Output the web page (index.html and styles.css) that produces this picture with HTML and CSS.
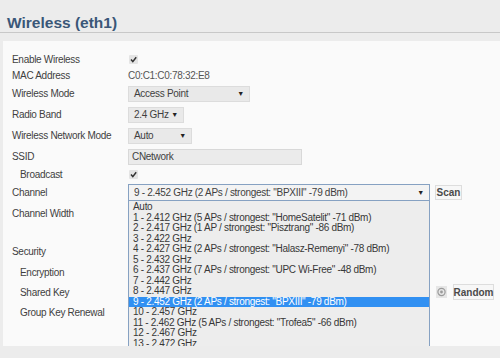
FILE: index.html
```html
<!DOCTYPE html>
<html>
<head>
    <title>Wireless (eth1)</title>
    <meta name="viewport" content="width=device-width, initial-scale=1">
    <link rel="stylesheet" href="styles.css">
</head>
<body>
    <h1 class="pageTitle">Wireless (eth1)</h1>
    <div class="panel">
        <div class="row short">
            <span class="label">Enable Wireless</span>
            <span class="check"><svg width="9" height="9" viewBox="0 0 9 9"><path d="M2 4.6 L3.8 6.6 L7.2 2.2" fill="none" stroke="#333" stroke-width="1.5"/></svg></span>
        </div>
        <div class="row short tall">
            <span class="label">MAC Address</span>
            <span class="value">C0:C1:C0:78:32:E8</span>
        </div>
        <div class="row">
            <span class="label">Wireless Mode</span>
            <span class="select wMode">Access Point<i>▼</i></span>
        </div>
        <div class="row">
            <span class="label">Radio Band</span>
            <span class="select wBand">2.4 GHz<i>▼</i></span>
        </div>
        <div class="row">
            <span class="label">Wireless Network Mode</span>
            <span class="select wNet">Auto<i>▼</i></span>
        </div>
        <div class="row">
            <span class="label">SSID</span>
            <span class="textbox">CNetwork</span>
        </div>
        <div class="row short">
            <span class="label sub">Broadcast</span>
            <span class="check"><svg width="9" height="9" viewBox="0 0 9 9"><path d="M2 4.6 L3.8 6.6 L7.2 2.2" fill="none" stroke="#333" stroke-width="1.5"/></svg></span>
        </div>
        <div class="row">
            <span class="label">Channel</span>
            <div class="channelWrap">
                <span class="select channel">9 - 2.452 GHz (2 APs / strongest: "BPXIII" -79 dBm)<i>▼</i></span>
                <ul class="channelList">
                    <li>Auto</li>
                    <li>1 - 2.412 GHz (5 APs / strongest: "HomeSatelit" -71 dBm)</li>
                    <li>2 - 2.417 GHz (1 AP / strongest: "Pisztrang" -86 dBm)</li>
                    <li>3 - 2.422 GHz</li>
                    <li>4 - 2.427 GHz (2 APs / strongest: "Halasz-Remenyi" -78 dBm)</li>
                    <li>5 - 2.432 GHz</li>
                    <li>6 - 2.437 GHz (7 APs / strongest: "UPC Wi-Free" -48 dBm)</li>
                    <li>7 - 2.442 GHz</li>
                    <li>8 - 2.447 GHz</li>
                    <li class="selected">9 - 2.452 GHz (2 APs / strongest: "BPXIII" -79 dBm)</li>
                    <li>10 - 2.457 GHz</li>
                    <li>11 - 2.462 GHz (5 APs / strongest: "Trofea5" -66 dBm)</li>
                    <li>12 - 2.467 GHz</li>
                    <li>13 - 2.472 GHz</li>
                </ul>
            </div>
            <span class="btn scanBtn">Scan</span>
        </div>
        <div class="row">
            <span class="label">Channel Width</span>
        </div>
        <div class="spacer"></div>
        <div class="row">
            <span class="label">Security</span>
        </div>
        <div class="row snug">
            <span class="label sub">Encryption</span>
        </div>
        <div class="row snug">
            <span class="label sub">Shared Key</span>
            <span class="textbox keyBox"></span>
            <span class="reveal"><svg width="11" height="12" viewBox="0 0 11 12"><rect x="0" y="0" width="11" height="12" fill="#e6e6e6"/><circle cx="5.5" cy="6" r="3.6" fill="none" stroke="#9a9a9a" stroke-width="1.2"/><circle cx="5.5" cy="6" r="1.4" fill="#9a9a9a"/></svg></span>
            <span class="btn randomBtn">Random</span>
        </div>
        <div class="row snug">
            <span class="label sub">Group Key Renewal</span>
        </div>
    </div>
</body>
</html>
```

FILE: styles.css
```css
body {
    margin: 0;
    background: #ececec;
    font-family: "Liberation Sans", Arial, sans-serif;
    font-size: 10px;
    letter-spacing: -0.3px;
    color: #3f3f3f;
    overflow: hidden;
}
.pageTitle {
    margin: 0;
    padding: 14px 0 0 7px;
    height: 18px;
    font-size: 15.5px;
    letter-spacing: 0;
    color: #3a5778;
    border-bottom: 1px solid #c8c8c8;
}
.panel {
    margin: 8px 0 0 3px;
    height: 294px;
    padding-top: 11px;
    background: #fafafa;
}
.row {
    display: flex;
    align-items: center;
    height: 21px;
}
.row.short {
    height: 15px;
}
.row.short.tall {
    height: 16px;
}
.row.snug {
    height: 20px;
}
.spacer {
    height: 17px;
}
.label {
    width: 125px;
    flex-shrink: 0;
    padding-left: 9px;
    box-sizing: border-box;
}
.label.sub {
    padding-left: 17px;
}
.check {
    display: flex;
    width: 9px;
    height: 9px;
    margin-left: 1px;
    background: #e4e4e4;
    border-radius: 1px;
}
.value {
    color: #555;
}
.select {
    display: flex;
    justify-content: space-between;
    align-items: center;
    height: 16px;
    box-sizing: border-box;
    padding: 0 5px 0 5px;
    background: #e9e9e9;
    border: 1px solid #dcdcdc;
    color: #3f3f3f;
}
.select i {
    font-style: normal;
    font-size: 7px;
    color: #222;
}
.wMode {
    width: 122px;
}
.wBand {
    width: 56px;
}
.wNet {
    width: 64px;
}
.textbox {
    display: flex;
    align-items: center;
    width: 174px;
    height: 16px;
    box-sizing: border-box;
    padding-left: 3px;
    background: #ebebeb;
    border: 1px solid #d8d8d8;
}
.keyBox {
    width: 302px;
}
.channel {
    width: 302px;
}
.channelWrap {
    position: relative;
}
.channelWrap .channel {
    height: 17px;
    background: #f3f3f3;
    border-color: #86a1c2;
}
.channelList {
    position: absolute;
    top: 100%;
    left: 0;
    z-index: 2;
    width: 302px;
    height: 150px;
    box-sizing: border-box;
    margin: 0;
    padding: 1px 0 0;
    list-style: none;
    background: #ededed;
    border: 1px solid #86a1c2;
    border-top: none;
    color: #383838;
}
.channelList li {
    height: 10.5px;
    line-height: 10.5px;
    padding-left: 4px;
    white-space: nowrap;
}
.channelList li.selected {
    background: #3190f2;
    color: white;
}
.btn {
    display: flex;
    align-items: center;
    justify-content: center;
    height: 15px;
    box-sizing: border-box;
    background: #f7f7f7;
    border: 1px solid #dddddd;
    font-weight: bold;
    letter-spacing: 0;
    color: #4a4a4a;
}
.scanBtn {
    width: 27px;
    margin-left: 5px;
}
.reveal {
    display: flex;
    margin-left: 6px;
}
.randomBtn {
    width: 41px;
    height: 16px;
    margin-left: 6px;
}
```
